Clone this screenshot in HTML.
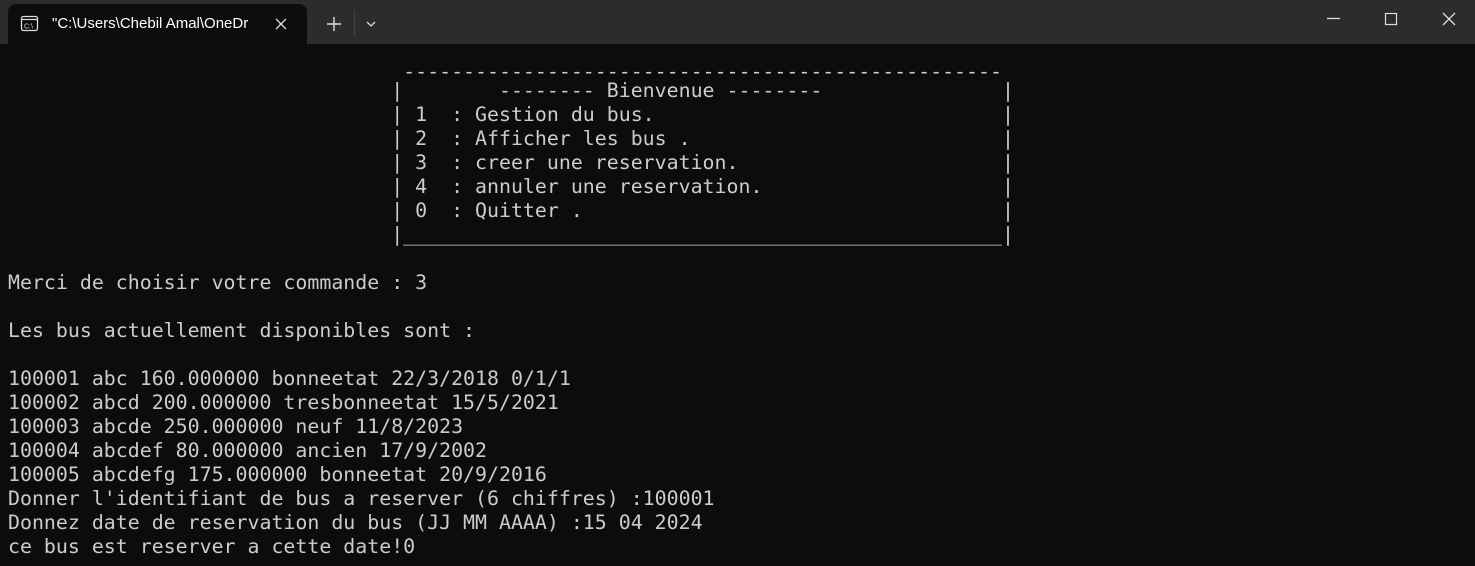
<!DOCTYPE html>
<html><head><meta charset="utf-8"><style>
html,body{margin:0;padding:0;width:1475px;height:566px;overflow:hidden;background:#0c0c0c}
.bar{position:absolute;left:0;top:0;width:1475px;height:44px;background:#2c2c2c}
.tab{position:absolute;left:8px;top:4px;width:299px;height:40px;background:#0c0c0c;border-radius:8px 8px 0 0}
.tab .t{position:absolute;left:44px;top:11px;font:15px "Liberation Sans",sans-serif;color:#fff;white-space:nowrap}
pre{position:absolute;left:8px;top:55px;margin:0;font-family:"DejaVu Sans Mono","Liberation Mono",monospace;font-size:19.9px;line-height:24px;color:#cccccc}
.dn{position:relative;top:5px}
</style></head><body>
<div class="bar"></div>
<div class="tab"><div class="t">"C:\Users\Chebil Amal\OneDr</div></div>
<svg style="position:absolute;left:0;top:0" width="1475" height="44">
<rect x="21.5" y="16.5" width="16" height="14" rx="2" fill="none" stroke="#ddd" stroke-width="1.3"/>
<line x1="22" y1="19.5" x2="37" y2="19.5" stroke="#ddd" stroke-width="1.2"/>
<text x="24" y="28.5" font-family="Liberation Sans" font-size="7" fill="#ddd">C:\</text>
<path d="M276 19L286 29M286 19L276 29" stroke="#ddd" stroke-width="1.3"/>
<path d="M334 17V31M327 24H341" stroke="#ddd" stroke-width="1.4"/>
<line x1="354.5" y1="10" x2="354.5" y2="36" stroke="#444"/>
<path d="M367 22L371 26L375 22" fill="none" stroke="#ddd" stroke-width="1.3"/>
<path d="M1327 18.5H1340" stroke="#ddd" stroke-width="1.3"/>
<rect x="1385.5" y="13.5" width="11" height="11" fill="none" stroke="#ddd" stroke-width="1.2"/>
<path d="M1443 13L1455 25M1455 13L1443 25" stroke="#ddd" stroke-width="1.3"/>
</svg>
<pre><span class="dn">                                 --------------------------------------------------</span>
                                |        -------- Bienvenue --------               |
                                | 1  : Gestion du bus.                             |
                                | 2  : Afficher les bus .                          |
                                | 3  : creer une reservation.                      |
                                | 4  : annuler une reservation.                    |
                                | 0  : Quitter .                                   |
                                |__________________________________________________|

Merci de choisir votre commande : 3

Les bus actuellement disponibles sont :

100001 abc 160.000000 bonneetat 22/3/2018 0/1/1
100002 abcd 200.000000 tresbonneetat 15/5/2021
100003 abcde 250.000000 neuf 11/8/2023
100004 abcdef 80.000000 ancien 17/9/2002
100005 abcdefg 175.000000 bonneetat 20/9/2016
Donner l'identifiant de bus a reserver (6 chiffres) :100001
Donnez date de reservation du bus (JJ MM AAAA) :15 04 2024
ce bus est reserver a cette date!0</pre>
</body></html>
